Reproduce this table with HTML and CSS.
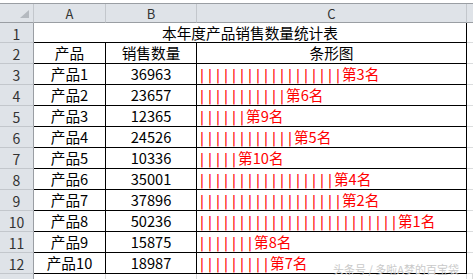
FILE: index.html
```html
<!DOCTYPE html>
<html lang="zh-CN">
<head>
<meta charset="utf-8">
<title>本年度产品销售数量统计表</title>
<link rel="stylesheet" href="styles.css">
</head>
<body>
<div class="page">
  <div class="sheet">
    <div class="corner"><span class="tri"></span></div>
    <div class="colhead">A</div>
    <div class="colhead">B</div>
    <div class="colhead">C</div>
    <div class="colhead last"></div>

    <div class="rowhead">1</div>
    <div class="title">本年度产品销售数量统计表</div>
    <div class="grid"></div>

    <div class="rowhead">2</div>
    <div class="cell center">产品</div>
    <div class="cell center">销售数量</div>
    <div class="cell center">条形图</div>
    <div class="grid"></div>

    <div class="rowhead">3</div>
    <div class="cell center">产品1</div>
    <div class="cell center">36963</div>
    <div class="cell bar"><span class="bars">||||||||||||||||||</span><span class="rank">第3名</span></div>
    <div class="grid"></div>

    <div class="rowhead">4</div>
    <div class="cell center">产品2</div>
    <div class="cell center">23657</div>
    <div class="cell bar"><span class="bars">|||||||||||</span><span class="rank">第6名</span></div>
    <div class="grid"></div>

    <div class="rowhead">5</div>
    <div class="cell center">产品3</div>
    <div class="cell center">12365</div>
    <div class="cell bar"><span class="bars">||||||</span><span class="rank">第9名</span></div>
    <div class="grid"></div>

    <div class="rowhead">6</div>
    <div class="cell center">产品4</div>
    <div class="cell center">24526</div>
    <div class="cell bar"><span class="bars">||||||||||||</span><span class="rank">第5名</span></div>
    <div class="grid"></div>

    <div class="rowhead">7</div>
    <div class="cell center">产品5</div>
    <div class="cell center">10336</div>
    <div class="cell bar"><span class="bars">|||||</span><span class="rank">第10名</span></div>
    <div class="grid"></div>

    <div class="rowhead">8</div>
    <div class="cell center">产品6</div>
    <div class="cell center">35001</div>
    <div class="cell bar"><span class="bars">|||||||||||||||||</span><span class="rank">第4名</span></div>
    <div class="grid"></div>

    <div class="rowhead">9</div>
    <div class="cell center">产品7</div>
    <div class="cell center">37896</div>
    <div class="cell bar"><span class="bars">||||||||||||||||||</span><span class="rank">第2名</span></div>
    <div class="grid"></div>

    <div class="rowhead">10</div>
    <div class="cell center">产品8</div>
    <div class="cell center">50236</div>
    <div class="cell bar"><span class="bars">|||||||||||||||||||||||||</span><span class="rank">第1名</span></div>
    <div class="grid"></div>

    <div class="rowhead">11</div>
    <div class="cell center">产品9</div>
    <div class="cell center">15875</div>
    <div class="cell bar"><span class="bars">|||||||</span><span class="rank">第8名</span></div>
    <div class="grid"></div>

    <div class="rowhead">12</div>
    <div class="cell center">产品10</div>
    <div class="cell center">18987</div>
    <div class="cell bar"><span class="bars">|||||||||</span><span class="rank">第7名</span></div>
    <div class="grid"></div>

    <div class="rowhead end"></div>
    <div class="empty"></div>
    <div class="empty"></div>
    <div class="empty"></div>
    <div class="empty"></div>
  </div>
  <div class="watermark">头条号 / 多啦A梦的百宝袋</div>
</div>
</body>
</html>
```

FILE: styles.css
```css
html, body {
  margin: 0;
  padding: 0;
  background: #ffffff;
}

.page {
  position: relative;
  width: 473px;
  height: 279px;
  overflow: hidden;
  padding-top: 3px;
  box-sizing: border-box;
  font-family: "Noto Sans CJK SC", "Noto Sans", sans-serif;
  font-size: 14.67px;
  color: #000;
}

.sheet {
  display: grid;
  grid-template-columns: 34px 72px 91px 270px 1fr;
  grid-template-rows: 19px 20px repeat(11, 21px) 6px;
  border-top: 1px solid #9a9ea3;
}

.sheet > div {
  box-sizing: border-box;
  min-width: 0;
  overflow: hidden;
  white-space: nowrap;
}

.corner {
  position: relative;
  background: #dfe3e8;
  border-right: 1px solid #c3c7cc;
  border-bottom: 1px solid #9a9ea3;
}

.tri {
  position: absolute;
  right: 4px;
  bottom: 4px;
  width: 0;
  height: 0;
  border-left: 9px solid transparent;
  border-bottom: 8px solid #b4b9bf;
}

.colhead {
  background: #dfe3e8;
  border-right: 1px solid #c3c7cc;
  border-bottom: 1px solid #9a9ea3;
  color: #333;
  font-size: 13px;
  display: flex;
  align-items: center;
  justify-content: center;
  line-height: 1;
}

.colhead.last {
  border-right: none;
}

.rowhead {
  background: #dfe3e8;
  border-right: 1px solid #9a9ea3;
  border-bottom: 1px solid #c3c7cc;
  color: #333;
  font-size: 14px;
  display: flex;
  align-items: center;
  justify-content: center;
  padding-top: 2px;
  line-height: 1;
}

.rowhead.end {
  border-bottom: none;
}

.title {
  grid-column: span 3;
  border-right: 1px solid #000;
  border-bottom: 1px solid #000;
  display: flex;
  align-items: center;
  justify-content: center;
  padding-top: 1px;
  line-height: 1;
}

.grid {
  border-bottom: 1px solid #dadcdd;
}

.cell {
  border-right: 1px solid #000;
  border-bottom: 1px solid #000;
  display: flex;
  align-items: center;
  line-height: 1;
  padding-top: 1px;
}

.cell.center {
  justify-content: center;
}

.cell.bar {
  padding-left: 1px;
  color: #ff0000;
}

.bars {
  display: inline-block;
  font-family: "DejaVu Sans Mono", monospace;
  font-size: 13.29px;
  font-weight: 300;
  letter-spacing: 0;
  line-height: 1;
  color: #ff0000;
  transform: scaleY(1.12);
  -webkit-font-smoothing: none;
}

.rank {
  color: #ff0000;
}

.empty {
  border-right: 1px solid #dadcdd;
}

.watermark {
  position: absolute;
  right: 14px;
  bottom: 4px;
  font-size: 11px;
  color: #c9c9c9;
  line-height: 1;
  white-space: nowrap;
}
```
